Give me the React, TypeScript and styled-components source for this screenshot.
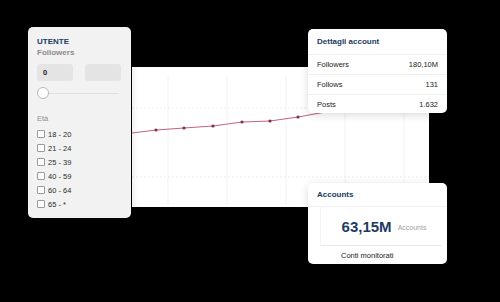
import React from 'react';
import styled, { createGlobalStyle } from 'styled-components';

const GlobalStyle = createGlobalStyle`
  html, body {
    margin: 0;
    padding: 0;
    background: #000;
  }
  body {
    font-family: "Liberation Sans", Arial, sans-serif;
    -webkit-font-smoothing: antialiased;
  }
`;

const Stage = styled.div`
  position: relative;
  width: 500px;
  height: 302px;
  overflow: hidden;
  background: #000;
`;

const ChartPanel = styled.div`
  margin: 67px 0 0 132px;
  width: 297px;
  height: 140px;
  background: #fff;
`;

const Card = styled.div<{ $x: number; $y: number; $w: number; $h: number }>`
  position: absolute;
  left: ${p => p.$x}px;
  top: ${p => p.$y}px;
  width: ${p => p.$w}px;
  height: ${p => p.$h}px;
  box-sizing: border-box;
  background: #fff;
  border-radius: 5px;
  box-shadow: 0 2px 8px rgba(0, 0, 0, 0.15);
  overflow: hidden;
`;

const FilterCard = styled(Card)`
  background: #f2f2f2;
  padding: 10px 9px 0 9px;
  display: flex;
  flex-direction: column;
`;

const FilterTitle = styled.div`
  font-size: 8px;
  font-weight: 700;
  color: #1d3a66;
  line-height: 10px;
`;

const FilterLabel = styled.div<{ $bold?: boolean; $gap?: number }>`
  font-size: ${p => (p.$bold ? 8 : 7.5)}px;
  font-weight: ${p => (p.$bold ? 700 : 400)};
  color: #8c8c8c;
  line-height: 10px;
  margin-top: ${p => p.$gap ?? 1}px;
`;

const InputRow = styled.div`
  display: flex;
  gap: 12px;
  margin-top: 6px;
`;

const InputBox = styled.div`
  width: 36px;
  height: 17px;
  box-sizing: border-box;
  background: #e4e4e4;
  border-radius: 3px;
  padding-left: 6px;
  font-size: 7.5px;
  font-weight: 700;
  color: #222;
  line-height: 17px;
`;

const SliderRow = styled.div`
  display: flex;
  align-items: center;
  margin-top: 6px;
  height: 12px;
`;

const Knob = styled.div`
  width: 10px;
  height: 10px;
  border-radius: 50%;
  background: #fff;
  border: 1px solid #b8b8b8;
  flex-shrink: 0;
`;

const Track = styled.div`
  height: 1px;
  width: 70px;
  background: #e0e0e0;
`;

const AgeList = styled.div`
  display: flex;
  flex-direction: column;
  margin-top: 3px;
`;

const AgeRow = styled.div`
  display: flex;
  align-items: center;
  height: 14px;
  gap: 3px;
  font-size: 7.5px;
  color: #2a2a2a;
`;

const Box = styled.span`
  width: 8px;
  height: 8px;
  box-sizing: border-box;
  border: 1px solid #9a9a9a;
  border-radius: 1px;
  background: #fff;
`;

const CardHeader = styled.div<{ $h: number }>`
  height: ${p => p.$h}px;
  padding: 0 9px;
  display: flex;
  align-items: center;
  font-size: 8px;
  font-weight: 700;
  color: #1d3a66;
  border-bottom: 1px solid #efefef;
`;

const DetailRow = styled.div<{ $last?: boolean }>`
  height: 19px;
  padding: 0 9px;
  display: flex;
  align-items: center;
  justify-content: space-between;
  font-size: 7.5px;
  color: #222;
  border-bottom: ${p => (p.$last ? 'none' : '1px solid #efefef')};
`;

const BigStat = styled.div`
  height: 38px;
  margin: 0 6px 0 12px;
  display: flex;
  align-items: center;
  justify-content: center;
  gap: 6px;
  border-bottom: 1px solid #e8e8e8;
  border-left: 1px solid #f4f4f4;
  padding-left: 6px;
`;

const BigValue = styled.span`
  font-size: 15px;
  font-weight: 700;
  color: #1d3a66;
`;

const BigUnit = styled.span`
  font-size: 7px;
  color: #a0a0a0;
  margin-top: 3px;
`;

const Caption = styled.div`
  height: 19px;
  padding-left: 33px;
  display: flex;
  align-items: center;
  font-size: 7.5px;
  color: #222;
`;

const points: [number, number][] = [
  [0, 66],
  [24, 63],
  [52, 61],
  [81, 59],
  [110, 55],
  [138, 54],
  [166, 50],
  [188, 46],
  [210, 42],
];

const Chart: React.FC = () => (
  <svg width="297" height="140" viewBox="0 0 297 140">
    {[36, 95, 154, 213, 272].map(x => (
      <line key={x} x1={x} y1={8} x2={x} y2={138} stroke="#f2f2f2" strokeWidth="1" />
    ))}
    {[41, 110].map(y => (
      <line key={y} x1={0} y1={y} x2={297} y2={y} stroke="#ececec" strokeWidth="1" strokeDasharray="2 2" />
    ))}
    <polyline
      points={points.map(p => p.join(',')).join(' ')}
      fill="none"
      stroke="#c4637a"
      strokeWidth="1"
    />
    {points.slice(1, 7).map(([x, y]) => (
      <circle key={x} cx={x} cy={y} r="1.6" fill="#7d3346" />
    ))}
  </svg>
);

const ages = ['18 - 20', '21 - 24', '25 - 39', '40 - 59', '60 - 64', '65 - *'];

const App: React.FC = () => (
  <>
    <GlobalStyle />
    <Stage>
      <ChartPanel>
        <Chart />
      </ChartPanel>

      <FilterCard $x={28} $y={27} $w={103} $h={191}>
        <FilterTitle>UTENTE</FilterTitle>
        <FilterLabel $bold>Followers</FilterLabel>
        <InputRow>
          <InputBox>0</InputBox>
          <InputBox />
        </InputRow>
        <SliderRow>
          <Knob />
          <Track />
        </SliderRow>
        <FilterLabel $gap={15}>Età</FilterLabel>
        <AgeList>
          {ages.map(a => (
            <AgeRow key={a}>
              <Box />
              {a}
            </AgeRow>
          ))}
        </AgeList>
      </FilterCard>

      <Card $x={308} $y={29} $w={139} $h={84}>
        <CardHeader $h={25}>Dettagli account</CardHeader>
        <DetailRow>
          <span>Followers</span>
          <span>180,10M</span>
        </DetailRow>
        <DetailRow>
          <span>Follows</span>
          <span>131</span>
        </DetailRow>
        <DetailRow $last>
          <span>Posts</span>
          <span>1.632</span>
        </DetailRow>
      </Card>

      <Card $x={308} $y={183} $w={139} $h={81}>
        <CardHeader $h={23}>Accounts</CardHeader>
        <BigStat>
          <BigValue>63,15M</BigValue>
          <BigUnit>Accounts</BigUnit>
        </BigStat>
        <Caption>Conti monitorati</Caption>
      </Card>
    </Stage>
  </>
);

export default App;
